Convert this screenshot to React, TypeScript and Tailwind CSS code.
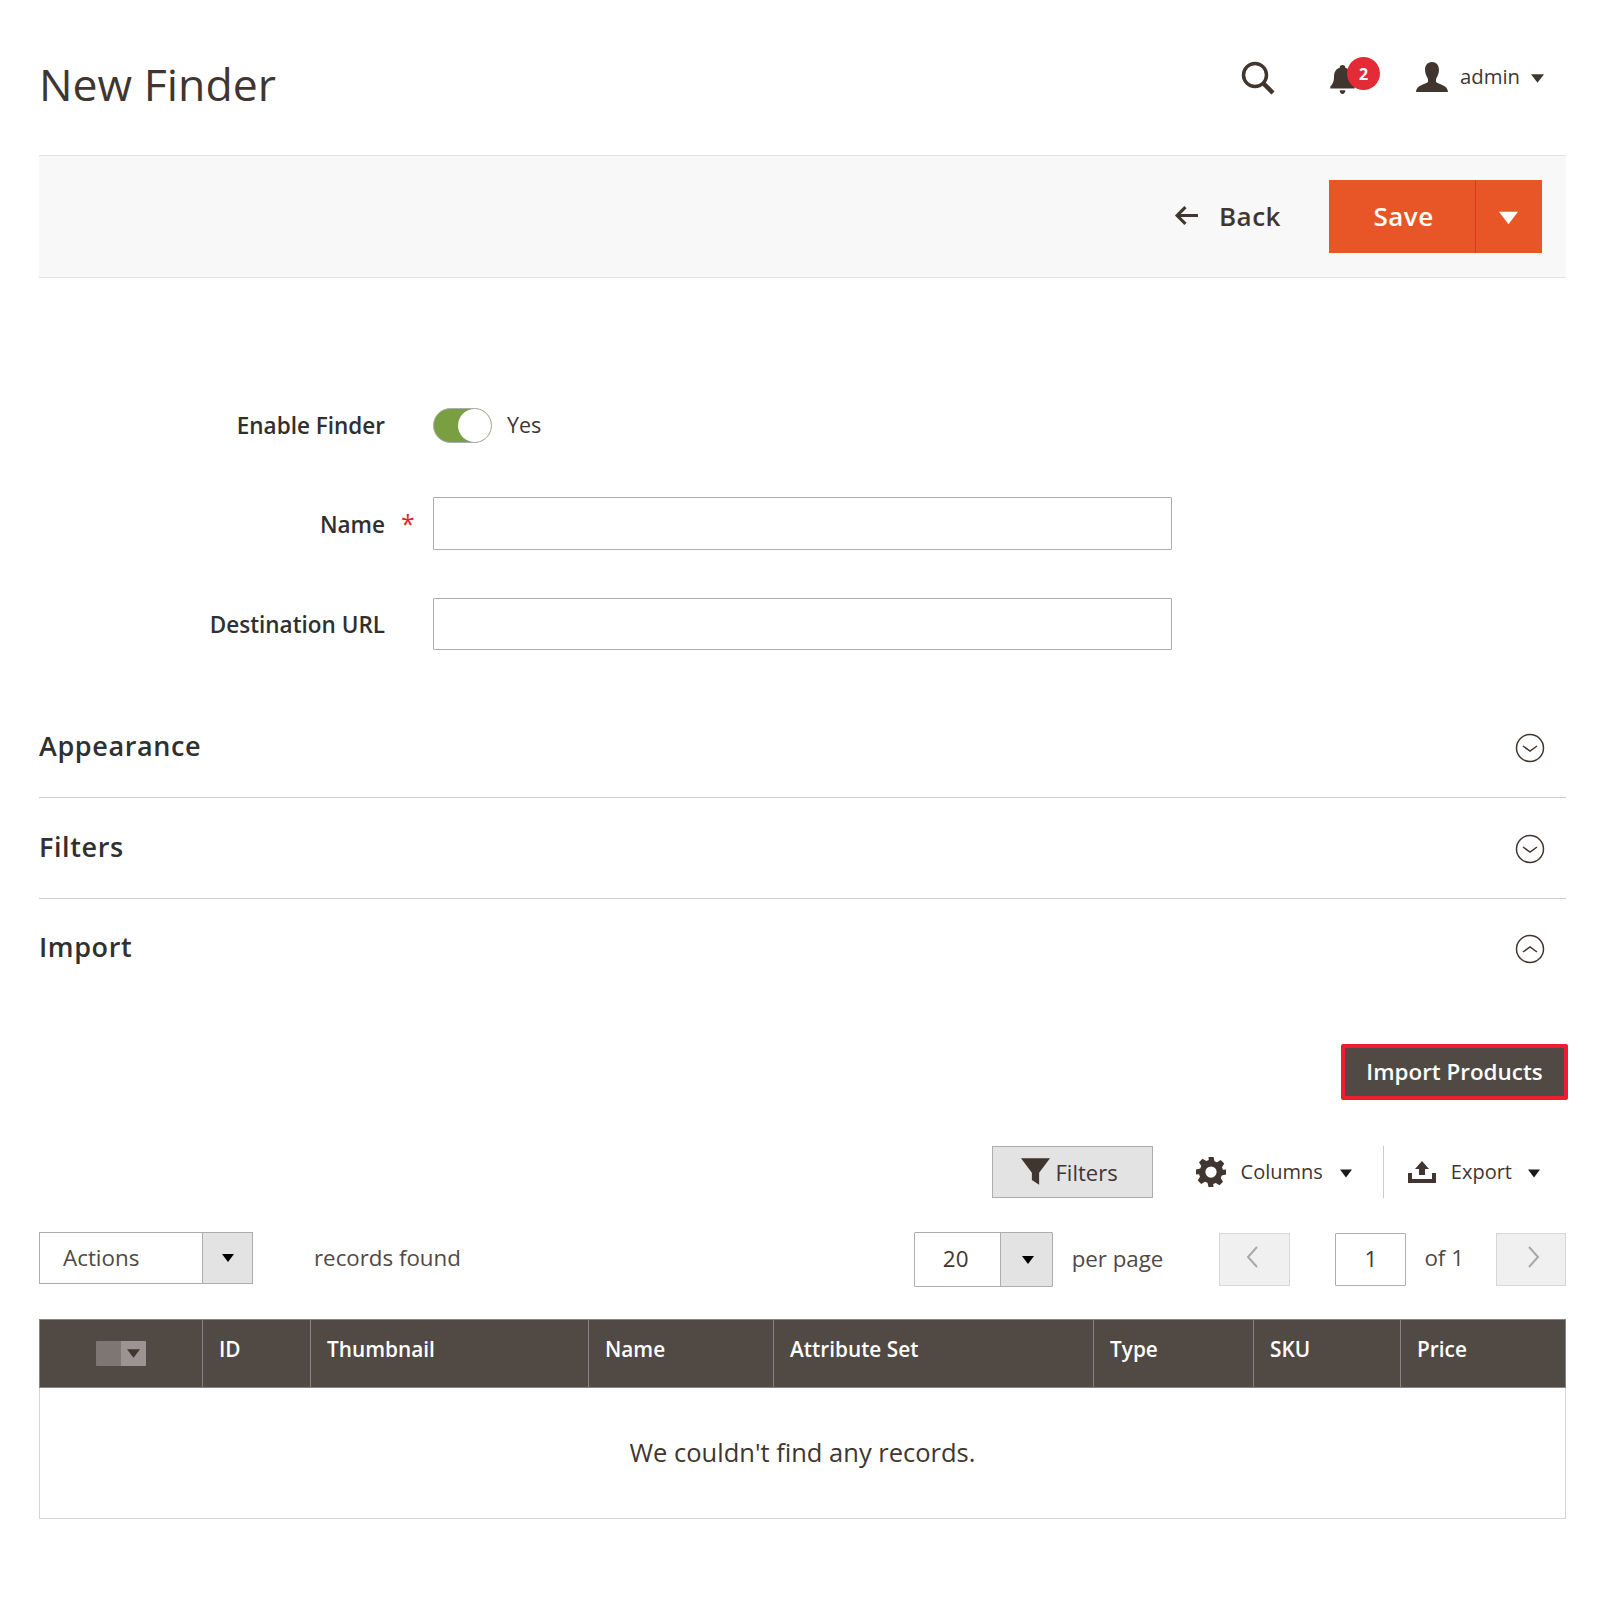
import React from "react";

const font = "font-['Open_Sans',sans-serif]";

const Caret = ({ className = "" }: { className?: string }) => (
  <svg viewBox="0 0 12 8" className={className} fill="currentColor">
    <path d="M0 0h12L6 8z" />
  </svg>
);

const Circle = ({ up }: { up?: boolean }) => (
  <svg viewBox="0 0 30 30" className="w-[30px] h-[30px] mr-[21px] mt-[2px]" fill="none" stroke="#41362f" strokeWidth="1.5">
    <circle cx="15" cy="15" r="13.5" />
    <path d={up ? "M8 18l7-5 7 5" : "M8 13l7 5 7-5"} />
  </svg>
);

const Section = ({ title, up, line = true, h }: { title: string; up?: boolean; line?: boolean; h: string }) => (
  <div className={`flex items-center justify-between ${h} ${line ? "border-b border-[#cccccc]" : ""}`}>
    <span className="text-[27px] font-semibold tracking-[0.6px] text-[#303030] pb-[1px]">{title}</span>
    <Circle up={up} />
  </div>
);

const FormRow = ({ label, req, className }: { label: string; req?: boolean; className: string }) => (
  <div className={`flex items-center ${className}`}>
    <div className="w-[346px] pt-[2px] text-right text-[22.5px] font-semibold text-[#303030]">{label}</div>
    <div className="w-[48px] pl-[16px] text-[25px] leading-none text-[#e22626]">{req ? "*" : ""}</div>
    <div className={`w-[739px] ${req ? "h-[53px]" : "h-[52px]"} bg-white border border-[#adadad] rounded-[1px]`} />
  </div>
);

const columns = [
  ["ID", "w-[108px]"],
  ["Thumbnail", "w-[278px]"],
  ["Name", "w-[185px]"],
  ["Attribute Set", "w-[320px]"],
  ["Type", "w-[160px]"],
  ["SKU", "w-[147px]"],
  ["Price", "flex-1"],
];

export default function App() {
  return (
    <div className={`${font} w-[1600px] h-[1600px] bg-white pl-[39px] pr-[34px] text-[#41362f]`}>
      <header className="h-[155px] flex items-start justify-between">
        <h1 className="mt-[54px] text-[44.6px] leading-[60px] font-normal text-[#41362f]">New Finder</h1>
        <div className="flex items-center mt-[61px]">
          <svg viewBox="0 0 34 34" className="w-[34px] h-[34px]" fill="none" stroke="#41362f">
            <circle cx="14" cy="14" r="11.5" strokeWidth="3.5" />
            <path d="M22 22l10 10" strokeWidth="4.5" />
          </svg>
          <div className="relative ml-[55px] w-[52px] h-[34px]">
            <svg viewBox="0 0 26 32" className="absolute left-0 top-[4px] w-[25px] h-[30px]" fill="#41362f">
              <path d="M13 0c2 0 3 1 3 3 4 1 6 5 6 9 0 6 2 9 4 11v2H0v-2c2-2 4-5 4-11 0-4 2-8 6-9 0-2 1-3 3-3zM10 27h6c0 2-1 4-3 4s-3-2-3-4z" />
            </svg>
            <span className="absolute left-[17px] top-[-4px] w-[33px] h-[33px] rounded-full bg-[#e22b37] text-white text-[16px] font-bold flex items-center justify-center">2</span>
          </div>
          <svg viewBox="0 0 32 30" className="ml-[34px] w-[32px] h-[30px] mb-[2px]" fill="#41362f">
            <path d="M16 0c5 0 7 4 7 8 0 4-2 7-3 9v3c2 2 12 3 12 10H0c0-7 10-8 12-10v-3c-1-2-3-5-3-9 0-4 2-8 7-8z" />
          </svg>
          <span className="ml-[12px] mb-[4px] text-[20.3px]">admin</span>
          <Caret className="ml-[11px] mr-[22px] mt-[1px] w-[13px] h-[9px]" />
        </div>
      </header>

      <div className="h-[123px] bg-[#f8f8f8] border-y border-[#e3e3e3] flex items-center justify-end pr-[24px]">
        <svg viewBox="0 0 24 20" className="w-[25px] h-[21px] mr-[20px] mb-[2px]" fill="none" stroke="#41362f" strokeWidth="3">
          <path d="M23 10H3M11 2l-8 8 8 8" />
        </svg>
        <span className="text-[26px] font-semibold tracking-[0.5px] text-[#41362f] mr-[48px]">Back</span>
        <div className="flex h-[73px] bg-[#e85628] text-white">
          <div className="w-[147px] pl-[3px] flex items-center justify-center text-[26px] font-semibold tracking-[0.5px] border-r border-[#b84a26]">Save</div>
          <div className="w-[66px] pr-[2px] flex items-center justify-center">
            <Caret className="w-[19px] h-[14px] mt-[3px]" />
          </div>
        </div>
      </div>

      <div className="pt-[129px]">
        <div className="flex items-center h-[37px]">
          <div className="w-[346px] text-right text-[22.5px] font-semibold text-[#303030]">Enable Finder</div>
          <div className="ml-[48px] w-[59px] h-[35px] rounded-full bg-[#7a9f43] border border-[#adadad] relative">
            <span className="absolute right-0 top-0 w-[33px] h-[33px] rounded-full bg-white" />
          </div>
          <span className="ml-[15px] text-[21.5px]">Yes</span>
        </div>
        <FormRow label="Name" req className="mt-[53px]" />
        <FormRow label="Destination URL" className="mt-[48px]" />
      </div>

      <div className="mt-[46px]">
        <Section title="Appearance" h="h-[102px]" />
        <Section title="Filters" h="h-[101px]" />
        <Section title="Import" up line={false} h="h-[98px]" />
      </div>

      <div className="mt-[47px] flex justify-end">
        <button className="mr-[-2px] w-[227px] h-[56px] bg-[#514943] border-[4px] border-[#ed1c2e] rounded-[2px] text-white text-[22.4px] font-semibold">Import Products</button>
      </div>

      <div className="mt-[46px] flex items-center justify-end h-[52px]">
        <div className="w-[161px] h-[52px] bg-[#e3e3e3] border border-[#adadad] flex items-center justify-center pr-[6px]">
          <svg viewBox="0 0 24 24" className="w-[29px] h-[29px] mr-[6px] mb-[2px]" fill="#41362f">
            <path d="M0 1h24l-9 12v10l-6-4v-6z" />
          </svg>
          <span className="text-[22px]">Filters</span>
        </div>
        <svg viewBox="0 0 24 24" className="ml-[43px] w-[30px] h-[30px]" fill="#41362f">
          <path fillRule="evenodd" d="M10 0h4l.8 3.4 2 .8 3-1.800 2.800 2.800-1.800 3 .8 2L24 10v4l-3.400.8-.8 2 1.800 3-2.800 2.800-3-1.800-2 .8L14 24h-4l-.8-3.400-2-.8-3 1.800-2.800-2.800 1.800-3-.8-2L0 14v-4l3.400-.8.8-2-1.800-3L5.200 1.400l3 1.800 2-.8zM12 7.500a4.500 4.500 0 1 0 0 9 4.500 4.500 0 0 0 0-9z" />
        </svg>
        <span className="ml-[15px] text-[20px]">Columns</span>
        <Caret className="ml-[17px] mt-[3px] w-[12px] h-[9px] text-[#1a1a1a]" />
        <div className="ml-[31px] w-px h-[52px] bg-[#cccccc]" />
        <svg viewBox="0 0 28 22" className="ml-[24px] w-[28px] h-[22px]" fill="#41362f">
          <path d="M14 0l7 8h-4v6h-6V8H7zM0 12h4v6h20v-6h4v10H0z" />
        </svg>
        <span className="ml-[15px] text-[20px]">Export</span>
        <Caret className="ml-[16px] mr-[26px] mt-[3px] w-[12px] h-[9px] text-[#1a1a1a]" />
      </div>

      <div className="mt-[33px] flex items-center h-[53px]">
        <div className="flex w-[214px] h-[52px] border border-[#adadad] bg-white">
          <span className="flex-1 pl-[23px] flex items-center text-[22.4px] text-[#514943]">Actions</span>
          <span className="w-[50px] bg-[#e3e3e3] border-l border-[#adadad] flex items-center justify-center">
            <Caret className="w-[12px] h-[8px] text-black" />
          </span>
        </div>
        <span className="ml-[61px] text-[22.3px] text-[#514943]">records found</span>

        <div className="ml-auto mt-[4px] flex w-[139px] h-[55px] border border-[#adadad] rounded-[1px] bg-white">
          <span className="flex-1 flex items-center justify-center text-[22.4px] pr-[3px] pb-[2px]">20</span>
          <span className="w-[52px] pl-[3px] bg-[#e3e3e3] border-l border-[#adadad] flex items-center justify-center">
            <Caret className="w-[12px] h-[8px] text-black" />
          </span>
        </div>
        <span className="ml-[19px] mt-[2px] text-[22.3px] text-[#514943]">per page</span>
        <div className="ml-[56px] mt-[4px] w-[71px] h-[53px] bg-[#f0f0f0] border border-[#d6d6d6] flex items-center justify-center">
          <svg viewBox="0 0 12 22" className="w-[12px] h-[22px] mb-[6px] mr-[6px]" fill="none" stroke="#a8a8a8" strokeWidth="2"><path d="M11 1L2 11l9 10" /></svg>
        </div>
        <div className="ml-[45px] mt-[4px] pb-[2px] w-[71px] h-[53px] border border-[#adadad] rounded-[1px] flex items-center justify-center text-[22.4px]">1</div>
        <span className="ml-[18px] text-[22.4px] text-[#514943]">of 1</span>
        <div className="ml-[32px] mt-[4px] w-[70px] h-[53px] bg-[#f0f0f0] border border-[#d6d6d6] flex items-center justify-center">
          <svg viewBox="0 0 12 22" className="w-[12px] h-[22px] mb-[6px] ml-[6px]" fill="none" stroke="#a8a8a8" strokeWidth="2"><path d="M1 1l9 10-9 10" /></svg>
        </div>
      </div>

      <div className="mt-[35px] border-x border-b border-[#d6d6d6]">
        <div className="-mx-px flex h-[69px] bg-[#514943] border border-[#8a837f] text-white text-[20.8px] font-semibold">
          <div className="w-[162px] flex items-center justify-center">
            <div className="flex w-[50px] h-[25px] rounded-[1px] overflow-hidden">
              <span className="w-[25px] bg-[#7d7672]" />
              <span className="w-[25px] bg-[#9a9591] flex items-center justify-center">
                <Caret className="w-[13px] h-[9px] text-[#41362f]" />
              </span>
            </div>
          </div>
          {columns.map(([name, w]) => (
            <div key={name} className={`${w} border-l border-[#8a837f] pl-[16px] pb-[8px] flex items-center`}>{name}</div>
          ))}
        </div>
        <div className="h-[130px] pb-[2px] flex items-center justify-center text-[25.5px] text-[#41362f]">We couldn't find any records.</div>
      </div>
    </div>
  );
}
